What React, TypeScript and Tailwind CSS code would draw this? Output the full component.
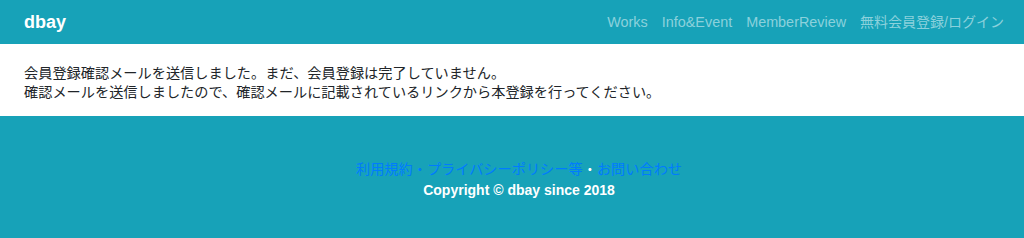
const font = { fontFamily: '"Liberation Sans", "Noto Sans CJK JP", sans-serif' };

const navItems = [
    { label: 'Works', size: 'text-[14.4px]' },
    { label: 'Info&Event', size: 'text-[14.4px]' },
    { label: 'MemberReview', size: 'text-[14.4px]' },
    { label: '無料会員登録/ログイン', size: 'text-[14px]' },
];

const App = () => {
    return (
        <div className="w-[1024px] h-[238px] flex flex-col bg-[#17a2b8]" style={font}>
            <header className="h-[44px] flex items-center justify-between pl-6 pr-5">
                <a className="text-white text-[18px] font-bold leading-none">dbay</a>
                <nav className="flex items-center gap-[14px]">
                    {navItems.map((item) => (
                        <a key={item.label} className={`${item.size} text-[#8bd1dc] leading-none`}>
                            {item.label}
                        </a>
                    ))}
                </nav>
            </header>

            <main className="bg-white h-[72px] px-6 pt-[20px]">
                <p className="text-[14.2px] leading-[19px] text-[#212529]">
                    会員登録確認メールを送信しました。まだ、会員登録は完了していません。
                    <br />
                    確認メールを送信しましたので、確認メールに記載されているリンクから本登録を行ってください。
                </p>
            </main>

            <footer className="flex-1 flex flex-col items-center pt-[43px] pl-[14px]">
                <p className="text-[14.2px] leading-[21px]">
                    <a className="text-[#007bff]">利用規約・プライバシーポリシー等</a>
                    <span className="text-white">・</span>
                    <a className="text-[#007bff]">お問い合わせ</a>
                </p>
                <p className="text-[14px] leading-[21px] text-white font-semibold">Copyright © dbay since 2018</p>
            </footer>
        </div>
    );
};

export default App;
